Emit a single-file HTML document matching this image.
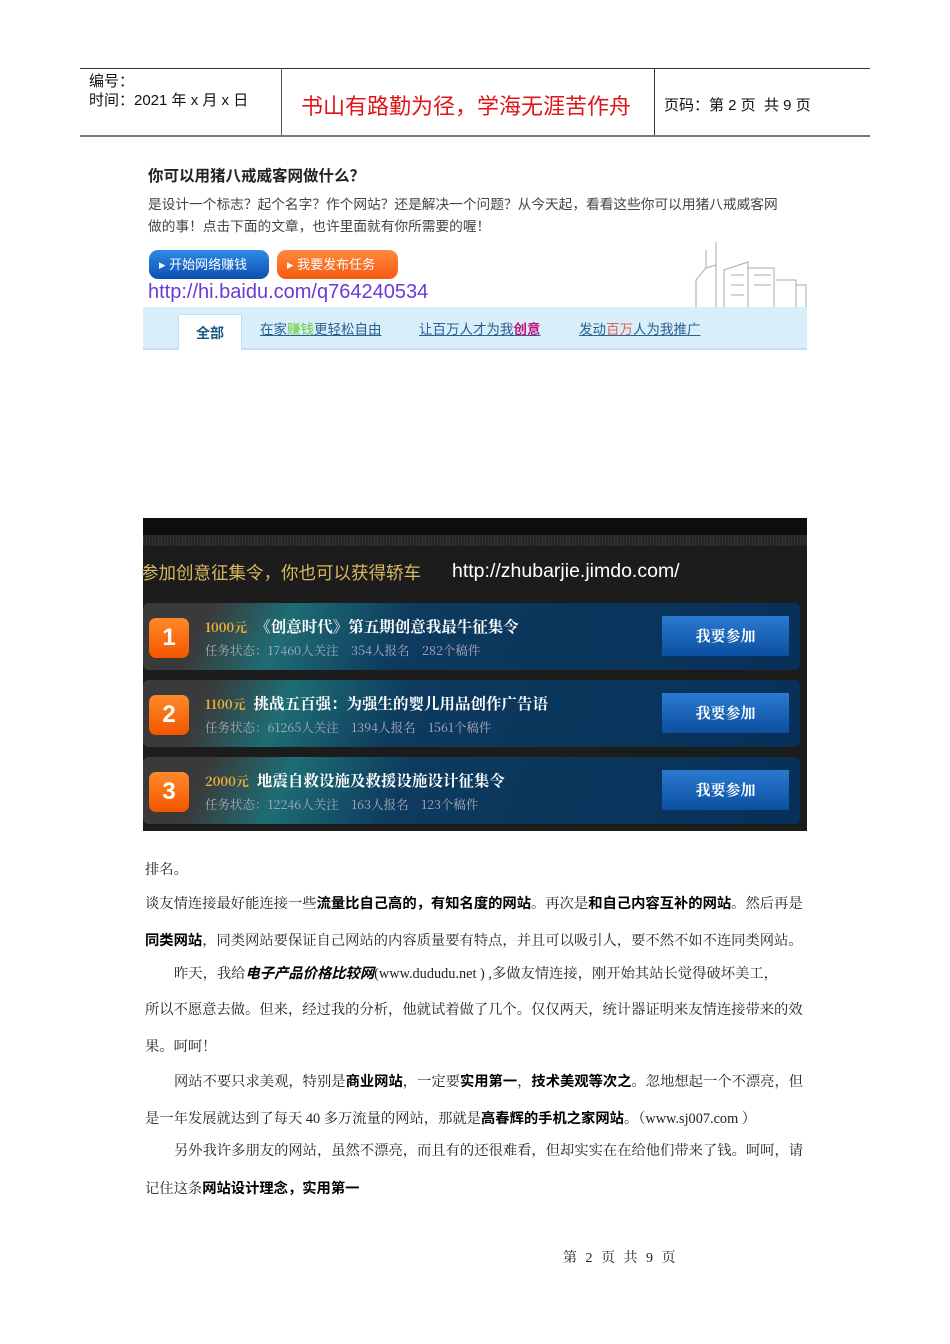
<!DOCTYPE html>
<html><head><meta charset="utf-8"><style>
*{margin:0;padding:0;box-sizing:border-box}
body{width:950px;height:1344px;background:#fff;position:relative;font-family:"Liberation Sans","Noto Sans CJK SC",sans-serif;overflow:hidden}
.a{position:absolute;white-space:nowrap}
.serif{font-family:"Liberation Serif","Noto Serif CJK SC",serif;font-size:14.3px;color:#222}
.serif b{font-family:"Liberation Sans","Noto Sans CJK SC",sans-serif;font-weight:bold;color:#000}
.row{position:absolute;left:143px;width:657px;height:67px;border-radius:6px;background:linear-gradient(115deg,#3a3a3a 0%,#3a3a3a 10%,#1e6d74 22%,#0d3a5e 40%,#07305a 100%)}
.num{position:absolute;left:6px;top:15px;width:40px;height:40px;border-radius:7px;background:linear-gradient(#ff8a2a,#f25500);color:#fff;font-weight:bold;font-size:24px;text-align:center;line-height:40px}
.btn{position:absolute;left:519px;top:13px;width:127px;height:40px;background:linear-gradient(#2a7ad0,#0c4fa0);color:#fff;font-weight:bold;font-size:15px;text-align:center;line-height:40px;font-family:"Noto Serif CJK SC",serif}
.t1{position:absolute;left:62px;top:12px;color:#fff;font-weight:bold;font-size:15.5px;font-family:"Noto Serif CJK SC",serif}
.t1 span{color:#f0b030;font-size:13px;margin-right:8px}
.t2{position:absolute;left:62px;top:38px;color:#aab;font-size:12.5px;font-family:"Noto Serif CJK SC",serif}
</style></head><body>
<div class="a" style="left:80px;top:68px;width:790px;height:1px;background:#333"></div>
<div class="a" style="left:80px;top:135px;width:790px;height:2px;background:#777"></div>
<div class="a" style="left:281px;top:68px;width:1px;height:67px;background:#555"></div>
<div class="a" style="left:654px;top:68px;width:1px;height:67px;background:#333"></div>
<div class="a" style="left:89px;top:70px;font-size:15px;color:#111">编号：</div>
<div class="a" style="left:89px;top:89px;font-size:15px;color:#111">时间：2021 年 x 月 x 日</div>
<div class="a" style="left:301px;top:89px;font-size:22px;color:#e0141a">书山有路勤为径，学海无涯苦作舟</div>
<div class="a" style="left:664px;top:94px;font-size:15px;color:#111">页码：第 2 页&nbsp; 共 9 页</div>

<div class="a" style="left:148px;top:164px;font-size:15.5px;font-weight:bold;color:#222">你可以用猪八戒威客网做什么？</div>
<div class="a" style="left:148px;top:193px;font-size:13.7px;color:#444">是设计一个标志？起个名字？作个网站？还是解决一个问题？从今天起，看看这些你可以用猪八戒威客网</div>
<div class="a" style="left:148px;top:215px;font-size:13.7px;color:#444">做的事！点击下面的文章，也许里面就有你所需要的喔！</div>
<div class="a" style="left:149px;top:250px;width:120px;height:29px;border-radius:9px;background:linear-gradient(#2f8ae6,#0b4fb0);color:#fff;font-size:13px;line-height:29px;padding-left:10px">▸ 开始网络赚钱</div>
<div class="a" style="left:277px;top:250px;width:121px;height:29px;border-radius:9px;background:linear-gradient(#ff8a40,#f45a10);color:#fff;font-size:13px;line-height:29px;padding-left:10px">▸ 我要发布任务</div>
<div class="a" style="left:148px;top:281px;font-size:20px;color:#6a3ad8">http://hi.baidu.com/q764240534</div>
<svg class="a" style="left:676px;top:240px" width="132" height="68" viewBox="0 0 132 68" fill="none" stroke="#aaa" stroke-width="1"><path d="M20 68V40L30 28V10M30 28L40 25V2M40 25V68M48 68V30L72 22V68M72 28H98V68M100 40H120V68M120 45H130V68M55 35H68M55 45H68M55 55H68M78 35H95M78 45H95"/></svg>
<div class="a" style="left:143px;top:307px;width:664px;height:43px;background:#d8eefa;border-bottom:2px solid #c2e0f2"></div>
<div class="a" style="left:178px;top:314px;width:64px;height:36px;background:#fff;border:1px solid #c2e0f2;border-bottom:none;color:#1a5a80;font-weight:bold;font-size:14px;text-align:center;line-height:36px">全部</div>
<div class="a" style="left:260px;top:318px;font-size:13.5px;color:#2a6090;text-decoration:underline">在家<span style="color:#6c3">赚钱</span>更轻松自由</div>
<div class="a" style="left:419px;top:318px;font-size:13.5px;color:#2a6090;text-decoration:underline">让百万人才为我<b style="color:#c0127a">创意</b></div>
<div class="a" style="left:579px;top:318px;font-size:13.5px;color:#2a6090;text-decoration:underline">发动<span style="color:#e06050">百万</span>人为我推广</div>

<div class="a" style="left:143px;top:518px;width:664px;height:313px;background:#1c1c1c"></div>
<div class="a" style="left:143px;top:518px;width:664px;height:17px;background:#0e0e0e"></div>
<div class="a" style="left:143px;top:535px;width:664px;height:11px;background:repeating-linear-gradient(90deg,#333 0 1px,#262626 1px 3px)"></div>
<div class="a" style="left:141px;top:560px;font-size:17.5px;color:#d8b860">参加创意征集令，你也可以获得轿车</div>
<div class="a" style="left:452px;top:560px;font-size:19.5px;color:#fff">http://zhubarjie.jimdo.com/</div>
<div class="row" style="top:603px"><div class="num">1</div><div class="t1"><span>1000元</span>《创意时代》第五期创意我最牛征集令</div><div class="t2">任务状态：17460人关注　354人报名　282个稿件</div><div class="btn">我要参加</div></div>
<div class="row" style="top:680px"><div class="num">2</div><div class="t1"><span>1100元</span>挑战五百强：为强生的婴儿用品创作广告语</div><div class="t2">任务状态：61265人关注　1394人报名　1561个稿件</div><div class="btn">我要参加</div></div>
<div class="row" style="top:757px"><div class="num">3</div><div class="t1"><span>2000元</span>地震自救设施及救援设施设计征集令</div><div class="t2">任务状态：12246人关注　163人报名　123个稿件</div><div class="btn">我要参加</div></div>

<div class="a serif" style="left:145px;top:859px">排名。</div>
<div class="a serif" style="left:145px;top:892px">谈友情连接最好能连接一些<b>流量比自己高的，有知名度的网站</b>。再次是<b>和自己内容互补的网站</b>。然后再是</div>
<div class="a serif" style="left:145px;top:929px"><b>同类网站</b>，同类网站要保证自己网站的内容质量要有特点，并且可以吸引人，要不然不如不连同类网站。</div>
<div class="a serif" style="left:174px;top:962px">昨天，我给<b><i>电子产品价格比较网</i></b>(www.dududu.net ) ,多做友情连接，刚开始其站长觉得破坏美工，</div>
<div class="a serif" style="left:145px;top:999px">所以不愿意去做。但来，经过我的分析，他就试着做了几个。仅仅两天，统计器证明来友情连接带来的效</div>
<div class="a serif" style="left:145px;top:1036px">果。呵呵！</div>
<div class="a serif" style="left:174px;top:1070px">网站不要只求美观，特别是<b>商业网站</b>，一定要<b>实用第一</b>，<b>技术美观等次之</b>。忽地想起一个不漂亮，但</div>
<div class="a serif" style="left:145px;top:1107px">是一年发展就达到了每天 40 多万流量的网站，那就是<b>高春辉的手机之家网站</b>。（www.sj007.com ）</div>
<div class="a serif" style="left:174px;top:1140px">另外我许多朋友的网站，虽然不漂亮，而且有的还很难看，但却实实在在给他们带来了钱。呵呵，请</div>
<div class="a serif" style="left:145px;top:1177px">记住这条<b>网站设计理念，实用第一</b></div>
<div class="a serif" style="left:563px;top:1247px;font-size:14px;letter-spacing:2.5px">第 2 页 共 9 页</div>
</body></html>
